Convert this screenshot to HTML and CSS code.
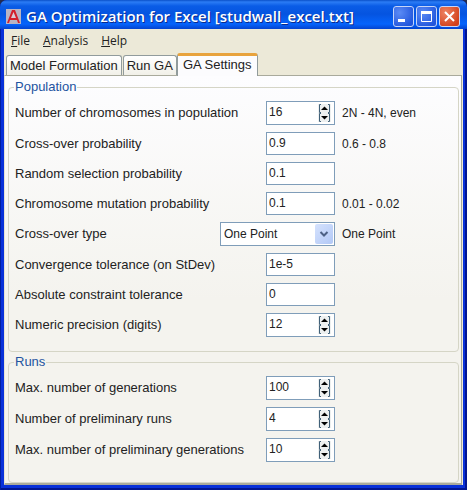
FILE: index.html
```
<!DOCTYPE html>
<html lang="en">
<head>
<meta charset="utf-8">
<title>GA Optimization for Excel [studwall_excel.txt]</title>
<link rel="stylesheet" href="styles.css">
</head>
<body>
<svg class="defs" width="0" height="0" aria-hidden="true">
  <symbol id="up" viewBox="0 0 13 9">
    <path d="M3 .5H1.500V8.500H3M10 .5h1.500v8H10" fill="none" stroke="#406078"/>
    <path d="M6.500 2.500L10 6H3z" fill="#000"/>
  </symbol>
  <symbol id="down" viewBox="0 0 13 9">
    <path d="M3 .5H1.500V8.500H3M10 .5h1.500v8H10" fill="none" stroke="#406078"/>
    <path d="M3 3h7L6.500 6.500z" fill="#000"/>
  </symbol>
</svg>
<div class="window">
  <header class="titlebar">
    <svg class="logo" width="15" height="15" viewBox="0 0 15 15" aria-hidden="true">
      <rect width="15" height="15" fill="#b9b4c3"/>
      <path d="M1 14L6 1h3l5 13h-2l-1-3H4l-1 3z" fill="#d3202c"/>
      <path d="M7.500 3L10 9H5z" fill="#d9ccd6"/>
    </svg>
    <h1>GA Optimization for Excel [studwall_excel.txt]</h1>
    <div class="caption-buttons">
      <button type="button" aria-label="Minimize"><svg width="19" height="19" viewBox="0 0 19 19"><path d="M4 13.500h7" stroke="#fff" stroke-width="3"/></svg></button>
      <button type="button" aria-label="Maximize"><svg width="19" height="19" viewBox="0 0 19 19"><path d="M4.500 5v9.500h10V5" fill="none" stroke="#fff"/><path d="M4 5.500h11" stroke="#fff" stroke-width="3"/></svg></button>
      <button type="button" class="close" aria-label="Close"><svg width="19" height="19" viewBox="0 0 19 19"><path d="M5 5l9 9M14 5l-9 9" stroke="#fff" stroke-width="2"/></svg></button>
    </div>
  </header>
  <div class="client">
    <nav class="menu">
      <a href="#"><u>F</u>ile</a>
      <a href="#"><u>A</u>nalysis</a>
      <a href="#"><u>H</u>elp</a>
    </nav>
    <div class="tabs" role="tablist">
      <button type="button" role="tab">Model Formulation</button>
      <button type="button" role="tab">Run GA</button>
      <button type="button" role="tab" class="active" aria-selected="true">GA Settings</button>
    </div>
    <main class="panel">
      <fieldset>
        <legend>Population</legend>
        <div class="row">
          <div class="field"><label for="chrom">Number of chromosomes in population</label>
            <div class="spin"><input id="chrom" type="text" value="16"><div class="arrows"><button type="button" aria-label="Increase"><svg><use href="#up"/></svg></button><button type="button" aria-label="Decrease"><svg><use href="#down"/></svg></button></div></div></div>
          <span class="hint">2N - 4N, even</span>
        </div>
        <div class="row">
          <div class="field"><label for="cross">Cross-over probability</label><input class="box" id="cross" type="text" value="0.9"></div>
          <span class="hint">0.6 - 0.8</span>
        </div>
        <div class="row">
          <div class="field"><label for="random">Random selection probability</label><input class="box" id="random" type="text" value="0.1"></div>
        </div>
        <div class="row">
          <div class="field"><label for="mutation">Chromosome mutation probability</label><input class="box" id="mutation" type="text" value="0.1"></div>
          <span class="hint">0.01 - 0.02</span>
        </div>
        <div class="row">
          <div class="field"><label for="type">Cross-over type</label>
            <div class="combo"><select id="type"><option>One Point</option></select><svg class="drop" viewBox="0 0 18 20" aria-hidden="true"><path d="M5.500 8L9 11.500 12.500 8" fill="none" stroke="#4d6185" stroke-width="2"/></svg></div></div>
          <span class="hint">One Point</span>
        </div>
        <div class="row">
          <div class="field"><label for="conv">Convergence tolerance (on StDev)</label><input class="box" id="conv" type="text" value="1e-5"></div>
        </div>
        <div class="row">
          <div class="field"><label for="abs">Absolute constraint tolerance</label><input class="box" id="abs" type="text" value="0"></div>
        </div>
        <div class="row">
          <div class="field"><label for="digits">Numeric precision (digits)</label>
            <div class="spin"><input id="digits" type="text" value="12"><div class="arrows"><button type="button" aria-label="Increase"><svg><use href="#up"/></svg></button><button type="button" aria-label="Decrease"><svg><use href="#down"/></svg></button></div></div></div>
        </div>
      </fieldset>
      <fieldset class="runs">
        <legend>Runs</legend>
        <div class="row">
          <div class="field"><label for="maxgen">Max. number of generations</label>
            <div class="spin"><input id="maxgen" type="text" value="100"><div class="arrows"><button type="button" aria-label="Increase"><svg><use href="#up"/></svg></button><button type="button" aria-label="Decrease"><svg><use href="#down"/></svg></button></div></div></div>
        </div>
        <div class="row">
          <div class="field"><label for="prelim">Number of preliminary runs</label>
            <div class="spin"><input id="prelim" type="text" value="4"><div class="arrows"><button type="button" aria-label="Increase"><svg><use href="#up"/></svg></button><button type="button" aria-label="Decrease"><svg><use href="#down"/></svg></button></div></div></div>
        </div>
        <div class="row">
          <div class="field"><label for="prelimgen">Max. number of preliminary generations</label>
            <div class="spin"><input id="prelimgen" type="text" value="10"><div class="arrows"><button type="button" aria-label="Increase"><svg><use href="#up"/></svg></button><button type="button" aria-label="Decrease"><svg><use href="#down"/></svg></button></div></div></div>
        </div>
      </fieldset>
    </main>
  </div>
</div>
</body>
</html>
```
FILE: styles.css
```
* { box-sizing: border-box; }
body {
  margin: 0;
  background: #222c50;
  font: 13px/16px "Liberation Sans", Arial, sans-serif;
  color: #222;
}
button, input, select { font: inherit; color: inherit; margin: 0; }
button { padding: 0; }
.defs { position: absolute; }

.window {
  display: flex;
  flex-direction: column;
  min-height: 100vh;
  padding: 0 4px 5px;
  border-radius: 7px 7px 0 0;
  background: #0831d9;
  box-shadow: inset 1px 0 #001ea0, inset -2px -2px #001590;
}
.titlebar {
  display: flex;
  align-items: center;
  height: 29px;
  margin: 0 -4px;
  padding: 3px 7px 0 6px;
  border-radius: 7px 7px 0 0;
  background: linear-gradient(#0a50c8 0, #2b7cf5 2px, #0a5ce6 6px, #0554e0 14px, #0664fc 24px, #0443cf 29px);
}
.logo { flex: none; }
h1 {
  flex: 1;
  margin: 0 0 0 5px;
  font: 600 15px/20px "Open Sans", "Noto Sans", sans-serif;
  color: #fff;
  text-shadow: 1px 1px #0a2a8c;
  white-space: nowrap;
}
.caption-buttons { display: flex; gap: 2px; }
.caption-buttons button {
  width: 21px;
  height: 21px;
  border: 1px solid #c6d5f8;
  border-radius: 3px;
  background: radial-gradient(circle at 30% 30%, #5b8bf5, #2256dc 80%);
}
.caption-buttons .close { background: radial-gradient(circle at 30% 30%, #ee8463, #d2401b 80%); }
.caption-buttons svg { display: block; }

.client { flex: 1; display: flex; flex-direction: column; background: #ece9d8; }
.menu {
  display: flex;
  gap: 13px;
  height: 24px;
  padding: 3px 7px 0;
  font: 12px/18px "Open Sans", "Noto Sans", sans-serif;
}
.menu a { color: #222; text-decoration: none; }

.tabs { display: flex; align-items: flex-end; height: 22px; padding-left: 2px; }
.tabs button {
  height: 20px;
  padding: 0 3px;
  border: 1px solid #919b9c;
  border-bottom: 0;
  border-radius: 3px 3px 0 0;
  background: linear-gradient(#fff, #f1f0e8);
}
.tabs button + button { margin-left: 1px; }
.tabs .active {
  position: relative;
  height: 23px;
  margin: 0 0 -1px;
  padding: 0 5px 3px;
  border-top: 3px solid #e8a33d;
  background: #fcfcfe;
}
.tabs button + .active { margin-left: 0; }

.panel {
  flex: 1;
  display: flex;
  flex-direction: column;
  gap: 2px;
  margin: 0 1px 0 0;
  padding: 3px 2px 0 3px;
  border: 1px solid #a9aa9c;
  border-left-color: #e4e2d4;
  border-bottom-width: 2px;
  background: linear-gradient(#fdfdff, #f4f3ee 55%);
}
fieldset {
  display: flex;
  flex-direction: column;
  gap: 7px;
  min-width: 0;
  margin: 0;
  padding: 6px 6px 14px;
  border: 1px solid #d5d5c6;
  border-radius: 4px;
}
.runs { flex: 1; }
legend { padding: 0 1px; margin-left: -1px; color: #2353a0; }
.row { display: grid; grid-template-columns: minmax(0, 320px) 1fr; column-gap: 7px; align-items: center; }
.field { display: flex; align-items: center; justify-content: space-between; white-space: nowrap; }
.hint { white-space: nowrap; font-size: 12px; }

.box, .spin, .combo { border: 1px solid #7f9db9; background: #fff; font-size: 12px; }
.box, .spin { width: 69px; }
.box { height: 23px; padding: 0 2px 2px; }
.spin { display: flex; height: 24px; padding: 2px 3px 2px 2px; }
.spin input { flex: 1; min-width: 0; padding: 0 0 2px; border: 0; background: none; }
.arrows { display: flex; flex-direction: column; }
.arrows button { border: 0; background: #edf0f0; }
.arrows svg { display: block; width: 13px; height: 9px; }
.combo { position: relative; width: 115px; height: 24px; }
.combo select {
  appearance: none;
  width: 100%;
  height: 100%;
  padding: 0 20px 0 3px;
  border: 0;
  background: none;
}
.drop {
  position: absolute;
  top: 1px;
  right: 1px;
  width: 18px;
  height: 20px;
  border-radius: 2px;
  background: linear-gradient(135deg, #d5e2fd, #b2c8f6);
  pointer-events: none;
}
```
